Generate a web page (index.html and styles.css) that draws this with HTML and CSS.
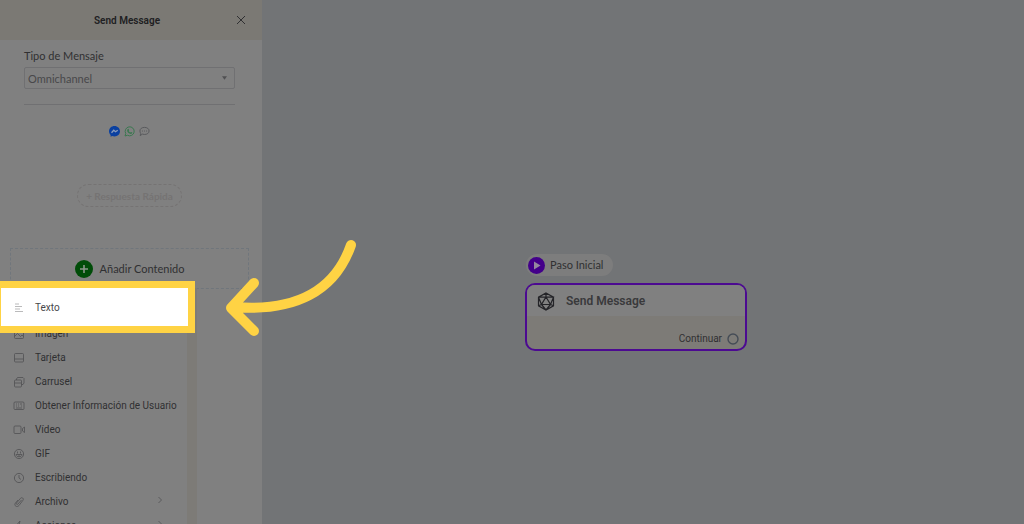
FILE: index.html
```html
<!DOCTYPE html>
<html lang="es">
<head>
<meta charset="UTF-8">
<meta name="viewport" content="width=device-width, initial-scale=1.0">
<title>Send Message</title>
<link rel="stylesheet" href="styles.css">
</head>
<body>
<aside class="panel">
    <header class="panel-header">
        <h1>Send Message</h1>
        <button class="close-btn" aria-label="Cerrar">
            <svg width="10" height="10" viewBox="0 0 10 10"><path d="M1 1l8 8M9 1l-8 8"/></svg>
        </button>
    </header>
    <div class="panel-body">
        <div class="field">
            <label for="messageType">Tipo de Mensaje</label>
            <div class="select-wrap">
                <select id="messageType">
                    <option>Omnichannel</option>
                </select>
                <svg class="caret" width="5" height="4" viewBox="0 0 6 4"><path d="M0 0h6L3 4z"/></svg>
            </div>
        </div>
        <hr>
        <div class="channels">
            <svg width="11" height="11" viewBox="0 0 22 22"><path fill="#0a40a0" d="M11 0C4.800 0 0 4.500 0 10.500c0 3 1.200 5.600 3.200 7.500V21.500l3.200-1.500c1.400.5 3 .8 4.600.8 6.200 0 11-4.500 11-10.300S17.200 0 11 0z"/><path d="M5 13.500l4.500-5 3.500 3 4.500-3" fill="none" stroke="#8b9cba" stroke-width="2.600"/></svg>
            <svg width="11" height="11" viewBox="0 0 22 22"><path d="M2 20l1.500-5A9 9 0 1 1 7 18.500z" fill="none" stroke="#3b7850" stroke-width="2"/><path fill="#3b7850" d="M7 6.500l2-.8 1.500 3-1 1.300c.8 1.500 1.800 2.400 3.200 3l1.300-1.200 2.800 1.400c0 2-1.600 3-3.300 2.800C9.500 15.300 6.300 12 6.200 8.800z"/></svg>
            <svg width="11" height="11" viewBox="0 0 24 22"><path d="M12 2c6 0 10 3.300 10 7.800s-4 7.700-10 7.700c-1.700 0-3.200-.3-4.600-.8L2.500 20l1.300-5C2.600 13.600 2 11.800 2 9.800 2 5.300 6 2 12 2z" fill="none" stroke="#55565a" stroke-width="2"/><path d="M6.500 10h2M11 10h2M15.500 10h2" stroke="#55565a" stroke-width="2"/></svg>
        </div>
        <button class="quick-reply">+ Respuesta Rápida</button>
        <div class="add-box">
            <button class="add-btn">
                <svg width="18" height="18" viewBox="0 0 18 18"><circle cx="9" cy="9" r="9" fill="#004c08"/><path d="M9 5v8M5 9h8" stroke="#8b958b" stroke-width="1.600"/></svg>
                Añadir Contenido
            </button>
            <ul class="menu">
                <li class="highlight"><button>
                    <svg viewBox="0 0 12 12"><path d="M2 2h4M2 4.500h7M2 7h5M2 9.500h8"/></svg>
                    Texto
                </button></li>
                <li><button>
                    <svg viewBox="0 0 12 12"><rect x="1.500" y="1.500" width="9" height="9" rx="1"/><path d="M1.500 8.500l3-3 3 3 1.500-1.500 1.500 1.500"/></svg>
                    Imagen
                </button></li>
                <li><button>
                    <svg viewBox="0 0 12 12"><rect x="1.500" y="1.500" width="9" height="8.500" rx="1"/><path d="M1.500 7h9"/></svg>
                    Tarjeta
                </button></li>
                <li><button>
                    <svg viewBox="0 0 12 12"><rect x="1.500" y="4" width="7" height="7" rx="1"/><path d="M1.500 7h7M3.500 4V3l1-1.500h5.500l1 1V7L10 8.500H8.500"/></svg>
                    Carrusel
                </button></li>
                <li><button>
                    <svg viewBox="0 0 12 12"><rect x="1" y="2" width="10" height="7.500" rx="1"/><path d="M3 4h1M5 4h1M7 4h2M3 6h1M5 6h1M8 6h1M3 8h6"/></svg>
                    Obtener Información de Usuario
                </button></li>
                <li><button>
                    <svg viewBox="0 0 12 12"><rect x="1" y="2" width="7" height="7.500" rx="1"/><path d="M9.500 4.500L11.500 3v5.500l-2-1.500z"/></svg>
                    Vídeo
                </button></li>
                <li><button>
                    <svg viewBox="0 0 12 12"><circle cx="6" cy="6" r="4.600"/><path d="M4.500 3.500v2M7.500 3.500v2M3 6.500h6c0 3-6 3-6 0zM6 6.500v2"/></svg>
                    GIF
                </button></li>
                <li><button>
                    <svg viewBox="0 0 12 12"><circle cx="6" cy="6" r="4.600"/><path d="M6 3v3l2 1.500"/></svg>
                    Escribiendo
                </button></li>
                <li><button>
                    <svg viewBox="0 0 12 12"><path d="M8.500 4L5 8c-1 1-2.300 0-1.400-1.100L7.500 2.300c1.300-1.500 3.600.2 2.500 1.900L6 9.500c-2 2.300-5.300.3-3.700-2.300L5 4"/></svg>
                    Archivo
                    <svg class="arrow" viewBox="0 0 6 8"><path d="M1.500 1L4.500 4 1.500 7"/></svg>
                </button></li>
                <li><button>
                    <svg viewBox="0 0 12 12"><path d="M7 1L2 7h3.500L4.500 11l5-6H6z"/></svg>
                    Acciones
                    <svg class="arrow" viewBox="0 0 6 8"><path d="M1.500 1L4.500 4 1.500 7"/></svg>
                </button></li>
            </ul>
        </div>
    </div>
</aside>

<main class="canvas">
    <div class="flow">
        <div class="start-tag">
            <svg width="17" height="17" viewBox="0 0 17 17"><circle cx="8.500" cy="8.500" r="8.500" fill="#43008a"/><path d="M6 4.500v8l6.500-4z" fill="#95889f"/></svg>
            Paso Inicial
        </div>
        <section class="node">
            <div class="node-title">
                <svg width="18" height="19" viewBox="0 0 18 19"><path d="M9 1l7.500 4.200v8.600L9 18l-7.500-4.200V5.200zM9 5l4.500 7.500h-9zM9 1v4M1.500 5.200L9 5l7.500.2-3 7.300 3 1.300M1.500 5.200l3 7.300-3 1.300M4.500 12.500L9 18l4.500-5.500"/></svg>
                <h2>Send Message</h2>
            </div>
            <div class="node-footer">
                Continuar
                <svg width="12" height="12" viewBox="0 0 12 12"><circle cx="6" cy="6" r="5"/></svg>
            </div>
        </section>
    </div>
</main>

<svg class="pointer" width="140" height="104" viewBox="220 236 140 104"><path d="M351 245C335 291 295 312 234 307M254 283L231 308L254 331"/></svg>
</body>
</html>
```

FILE: styles.css
```css
* {
    box-sizing: border-box;
}
body {
    margin: 0;
    height: 100vh;
    display: flex;
    overflow: hidden;
    position: relative;
    background-color: #727476;
    color: #303032;
    font-family: Lato, "Noto Sans", sans-serif;
    font-size: 11px;
    line-height: 16px;
}
button, select {
    font: inherit;
    color: inherit;
    background: none;
    border: none;
    padding: 0;
    cursor: pointer;
}
svg {
    flex: none;
}
h1, h2 {
    margin: 0;
    font-family: Roboto, sans-serif;
    font-weight: 600;
}

/* Side panel */
.panel {
    flex: none;
    width: 262px;
    overflow: hidden;
    background-color: #808080;
}
.panel-header {
    display: flex;
    align-items: center;
    height: 40px;
    padding: 0 16px;
    background-color: #7b7974;
}
.panel-header h1 {
    flex: 1;
    padding: 2px 0 0 2px;
    font-size: 10px;
    text-align: center;
    color: #202022;
}
.close-btn {
    display: flex;
    width: 10px;
}
.close-btn svg {
    fill: none;
    stroke: #303032;
}
.panel-body {
    display: flex;
    flex-direction: column;
    padding: 8px 10px;
}
.field {
    margin: 0 17px 0 14px;
}
.field label {
    display: block;
    margin-bottom: 3px;
}
.select-wrap {
    display: grid;
    align-items: center;
}
.select-wrap > * {
    grid-area: 1 / 1;
}
select {
    appearance: none;
    height: 22px;
    padding: 2px 3px 0;
    border: 1px solid #707072;
    border-radius: 2px;
    color: #48484a;
}
.caret {
    justify-self: end;
    margin-right: 8px;
    fill: #505052;
    pointer-events: none;
}
hr {
    align-self: stretch;
    margin: 15px 17px 0 14px;
    border: none;
    border-top: 1px solid #707072;
}
.channels {
    display: flex;
    justify-content: center;
    gap: 4px;
    margin: 21px 3px 0 0;
}
.quick-reply {
    align-self: center;
    height: 23px;
    margin: 47px 3px 0 0;
    padding: 0 8px;
    border: 1px dashed #757373;
    border-radius: 12px;
    color: #757373;
    font-weight: 700;
    font-size: 10px;
}
.add-box {
    position: relative;
    margin: 41px 3px 0 0;
    border: 1px dashed #70767c;
}
.add-btn {
    display: flex;
    align-items: center;
    justify-content: center;
    gap: 7px;
    width: 100%;
    height: 39px;
}

/* Content menu, opens over the panel */
.menu {
    position: absolute;
    top: 100%;
    left: -11px;
    width: 197px;
    margin: 0;
    padding: 0 0 16px;
    list-style: none;
    font-family: Roboto, sans-serif;
    font-size: 10px;
    background-color: #808080;
    border-right: 10px solid #7d7b77;
}
.menu button {
    display: flex;
    align-items: center;
    gap: 10px;
    width: 100%;
    height: 24px;
    padding: 0 0 0 13px;
    white-space: nowrap;
}
.menu svg {
    width: 12px;
    height: 12px;
    fill: none;
    stroke: #515153;
    stroke-width: 0.8;
}
.menu .arrow {
    width: 6px;
    height: 8px;
    margin: 0 24px 4px auto;
}
.menu .highlight {
    position: relative;
    z-index: 1;
    width: 195px;
    margin: -7px 0 -11px;
    padding: 8px 0 6px;
    background-color: #fff;
    border: 7px solid #ffd344;
    border-left-width: 1px;
}
.menu .highlight button {
    padding-left: 12px;
    color: #48484a;
}
.menu .highlight svg {
    stroke: #a8a8aa;
}

/* Flow canvas */
.canvas {
    flex: 1;
}
.flow {
    position: absolute;
    top: 254px;
    left: 525px;
    width: 222px;
}
.start-tag {
    display: flex;
    align-items: center;
    gap: 5px;
    width: fit-content;
    height: 22px;
    margin-left: 1px;
    padding: 0 10px 0 2px;
    border-radius: 11px;
    background-color: #7d7d7d;
}
.node {
    margin-top: 7px;
    border: 2px solid #4c0a91;
    border-radius: 10px;
    background-color: #7d7b77;
    overflow: hidden;
}
.node-title {
    display: flex;
    align-items: center;
    gap: 11px;
    height: 31px;
    padding: 1px 10px 0;
    background-color: #808080;
}
.node-title svg {
    fill: none;
    stroke: #242428;
    stroke-width: 1.2;
}
.node-title h2 {
    font-size: 12px;
    color: #39393b;
}
.node-footer {
    display: flex;
    align-items: center;
    justify-content: flex-end;
    gap: 5px;
    height: 33px;
    padding: 12px 6px 0;
    font-family: Roboto, sans-serif;
    font-size: 10px;
}
.node-footer svg {
    fill: none;
    stroke: #454c56;
    stroke-width: 1.4;
}

.pointer {
    position: absolute;
    top: 236px;
    left: 220px;
    fill: none;
    stroke: #ffd344;
    stroke-width: 10;
    stroke-linecap: round;
    stroke-linejoin: round;
}
```
